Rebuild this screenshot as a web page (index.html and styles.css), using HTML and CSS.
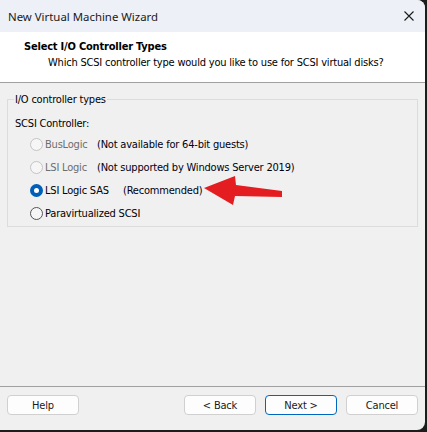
FILE: index.html
```html
<!DOCTYPE html>
<html lang="en">
<head>
  <meta charset="UTF-8" />
  <title>New Virtual Machine Wizard</title>
  <link rel="stylesheet" href="styles.css">
</head>
<body>
<div class="window">
  <div class="titlebar">
    <span class="title">New Virtual Machine Wizard</span>
    <svg class="close" width="10" height="10" viewBox="0 0 10 10">
      <path d="M0.5 0.5 L9.5 9.5 M9.5 0.5 L0.5 9.5" stroke="#1a1a1a" stroke-width="1.1" fill="none"/>
    </svg>
  </div>

  <div class="page-header">
    <div class="page-title">Select I/O Controller Types</div>
    <div class="page-sub">Which SCSI controller type would you like to use for SCSI virtual disks?</div>
  </div>

  <div class="content">
    <fieldset class="group">
      <legend>I/O controller types</legend>
      <div class="group-label">SCSI Controller:</div>
      <div class="option disabled">
        <span class="radio"></span>
        <span class="opt-name">BusLogic</span>
        <span class="opt-note">(Not available for 64-bit guests)</span>
      </div>
      <div class="option disabled">
        <span class="radio"></span>
        <span class="opt-name">LSI Logic</span>
        <span class="opt-note">(Not supported by Windows Server 2019)</span>
      </div>
      <div class="option">
        <span class="radio checked"></span>
        <span class="opt-name wide">LSI Logic SAS</span>
        <span class="opt-note">(Recommended)</span>
      </div>
      <div class="option">
        <span class="radio"></span>
        <span class="opt-name">Paravirtualized SCSI</span>
      </div>
    </fieldset>

    <!-- annotation arrow pointing at the recommended option -->
    <svg class="arrow" width="90" height="36" viewBox="0 0 90 36">
      <polygon points="0,13 31,1 32,10 78,16 78,22 31,21 29,30" fill="#e41e20"/>
    </svg>
  </div>

  <div class="footer">
    <button class="btn">Help</button>
    <div class="nav-buttons">
      <button class="btn">&lt; Back</button>
      <button class="btn default">Next &gt;</button>
      <button class="btn">Cancel</button>
    </div>
  </div>
</div>
</body>
</html>
```

FILE: styles.css
```css
html, body {
  margin: 0;
  padding: 0;
  background: #1c1c1c;
  height: 100%;
  overflow: hidden;
}

.window {
  width: 425px;
  height: 430px;
  background: #f0f0f0;
  border-radius: 0 8px 8px 0;
  overflow: hidden;
  display: flex;
  flex-direction: column;
  font-family: 'DejaVu Sans Condensed', 'DejaVu Sans', sans-serif;
  font-size: 11px;
  letter-spacing: -0.2px;
  color: #000;
  position: relative;
}

/* title bar */
.titlebar {
  height: 32px;
  flex: none;
  background: #eef0f7;
  display: flex;
  align-items: center;
  justify-content: space-between;
  padding: 0 10px 0 8px;
  font-family: 'Noto Sans', 'Open Sans', sans-serif;
  font-size: 11.4px;
  letter-spacing: 0;
}
.title {
  color: #1a1a1a;
}
.close {
  margin-right: 1px;
}

/* white wizard header */
.page-header {
  height: 51px;
  flex: none;
  background: #fff;
  border-bottom: 1px solid #a0a0a0;
  padding: 7px 0 0 24px;
  box-sizing: border-box;
}
.page-title {
  font-weight: bold;
  line-height: 15px;
}
.page-sub {
  padding-left: 24px;
  line-height: 17px;
  color: #000;
}

/* group box */
.content {
  flex: 1;
  position: relative;
  padding: 9px 7px 0 7px;
}
.group {
  margin: 0;
  padding: 9px 0 1px 7px;
  border: 1px solid #dcdcdc;
  min-width: 0;
}
.group legend {
  padding: 0 1px;
  margin-left: -1px;
  line-height: 15px;
}
.group-label {
  height: 17px;
  line-height: 15px;
}
.option {
  height: 23px;
  display: flex;
  align-items: center;
  padding-left: 15px;
  white-space: nowrap;
}
.radio {
  width: 11px;
  height: 11px;
  border: 1px solid #555;
  border-radius: 50%;
  background: #f6f6f6;
  margin-right: 2px;
  flex: none;
  box-sizing: content-box;
}
.option.disabled .radio {
  border-color: #c4c4c4;
}
.option.disabled .opt-name {
  color: #6d6d6d;
}
.radio.checked {
  background: #fff;
  border: 4px solid #005fb8;
  width: 5px;
  height: 5px;
}
.opt-name {
  width: 52px;
  flex: none;
}
.opt-name.wide {
  width: 78px;
}
.option:last-child .opt-name {
  width: auto;
}
.opt-note {
  color: #001;
}

.arrow {
  position: absolute;
  left: 204px;
  top: 92px;
}

/* footer buttons */
.footer {
  flex: none;
  height: 35px;
  border-top: 1px solid #a0a0a0;
  display: flex;
  justify-content: space-between;
  padding: 8px 7px 0 7px;
}
.nav-buttons {
  display: flex;
  gap: 9px;
}
.btn {
  width: 72px;
  height: 20px;
  padding: 0;
  background: #fdfdfd;
  border: 1px solid #d0d0d0;
  border-radius: 4px;
  font-family: 'DejaVu Sans Condensed', 'DejaVu Sans', sans-serif;
  font-size: 11px;
  letter-spacing: -0.2px;
  color: #1a1a1a;
}
.btn.default {
  border-color: #0067c0;
}
```
